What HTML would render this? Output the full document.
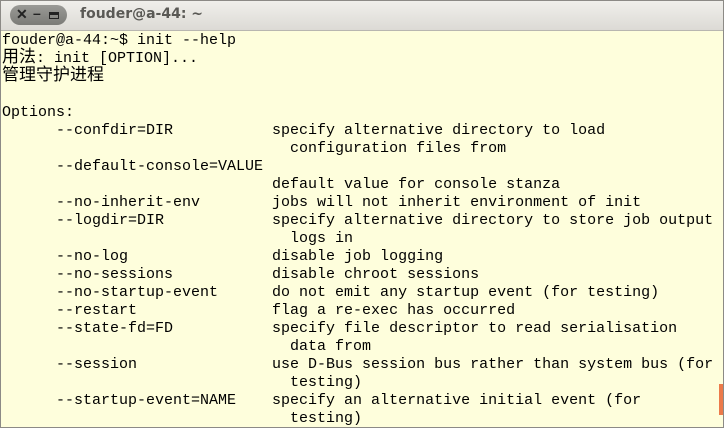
<!DOCTYPE html>
<html><head><meta charset="utf-8"><style>
body{margin:0;width:724px;height:428px;overflow:hidden;background:#fefedc;}
.title{position:absolute;left:0;top:0;width:724px;height:30px;background:linear-gradient(#f1f0ec,#dcdad5);border-bottom:1px solid #b8b6b0;}
.pill{position:absolute;left:10px;top:5px;width:57px;height:20px;border-radius:10px;background:linear-gradient(#9a9a96,#7b7b77);}
.pill span{position:absolute;color:#222;font:bold 14px "Liberation Sans",sans-serif;}
.tt{position:absolute;left:80px;top:6px;font:bold 14px "DejaVu Sans","Liberation Sans",sans-serif;color:#5a5955;}
pre{position:absolute;left:2px;top:32px;margin:0;font:15px/18px "Liberation Mono","Noto Sans CJK SC",monospace;color:#000;}
.cj{font-size:17px;}
.sb{position:absolute;left:719px;top:384px;width:4px;height:31px;background:#ec7a4a;}
.bd{position:absolute;left:0;top:0;width:722px;height:426px;border:1px solid #8c8a86;}
</style></head><body>
<div class="title"><div class="pill"><span style="left:6px;top:1px">✕</span><span style="left:23px;top:0px">–</span><span style="left:39px;top:7px;width:10px;height:7px;border:1.5px solid #222;border-top-width:3px;box-sizing:border-box"></span></div><div class="tt">fouder@a-44: ~</div></div>
<pre>fouder@a-44:~$ init --help
<span class="cj">用法</span>: init [OPTION]...
<span class="cj">管理守护进程</span>

Options:
      --confdir=DIR           specify alternative directory to load
                                configuration files from
      --default-console=VALUE
                              default value for console stanza
      --no-inherit-env        jobs will not inherit environment of init
      --logdir=DIR            specify alternative directory to store job output
                                logs in
      --no-log                disable job logging
      --no-sessions           disable chroot sessions
      --no-startup-event      do not emit any startup event (for testing)
      --restart               flag a re-exec has occurred
      --state-fd=FD           specify file descriptor to read serialisation
                                data from
      --session               use D-Bus session bus rather than system bus (for
                                testing)
      --startup-event=NAME    specify an alternative initial event (for
                                testing)</pre>
<div class="sb"></div><div class="bd"></div>
</body></html>
